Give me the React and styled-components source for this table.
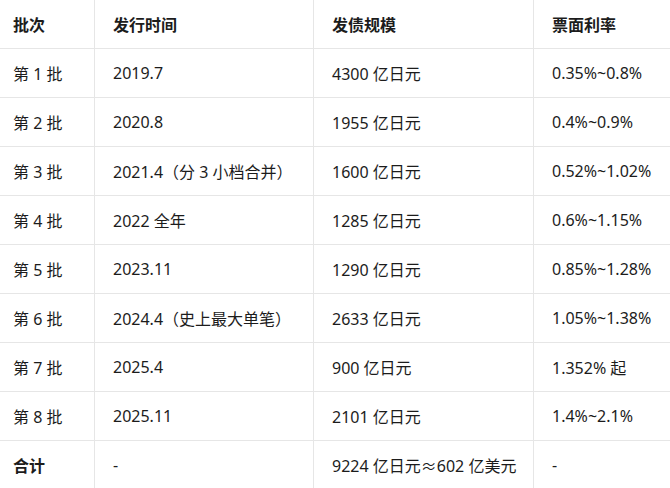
import React from 'react';
import styled, { createGlobalStyle } from 'styled-components';

const GlobalStyle = createGlobalStyle`
  html, body {
    margin: 0;
    padding: 0;
    background: #ffffff;
  }
  body {
    font-family: 'Noto Sans', 'Noto Sans CJK SC', sans-serif;
    color: #1c1c1c;
  }
`;

const Table = styled.div`
  display: grid;
  grid-template-columns: 95px 219px 220px 136px;
  width: 670px;
`;

const Cell = styled.div`
  box-sizing: border-box;
  height: 49px;
  display: flex;
  align-items: center;
  padding-left: ${(p) => (p.first ? '13px' : '18px')};
  font-size: 16px;
  font-weight: ${(p) => (p.bold ? 700 : 400)};
  border-bottom: 1px solid #e6e6e6;
  border-right: ${(p) => (p.last ? 'none' : '1px solid #e6e6e6')};
  white-space: nowrap;
`;

const header = ['批次', '发行时间', '发债规模', '票面利率'];

const rows = [
  ['第 1 批', '2019.7', '4300 亿日元', '0.35%~0.8%'],
  ['第 2 批', '2020.8', '1955 亿日元', '0.4%~0.9%'],
  ['第 3 批', '2021.4（分 3 小档合并）', '1600 亿日元', '0.52%~1.02%'],
  ['第 4 批', '2022 全年', '1285 亿日元', '0.6%~1.15%'],
  ['第 5 批', '2023.11', '1290 亿日元', '0.85%~1.28%'],
  ['第 6 批', '2024.4（史上最大单笔）', '2633 亿日元', '1.05%~1.38%'],
  ['第 7 批', '2025.4', '900 亿日元', '1.352% 起'],
  ['第 8 批', '2025.11', '2101 亿日元', '1.4%~2.1%'],
];

const total = ['合计', '-', '9224 亿日元≈602 亿美元', '-'];

const Row = ({ cells, bold, firstBold }) =>
  cells.map((text, i) => (
    <Cell
      key={i}
      first={i === 0}
      last={i === cells.length - 1}
      bold={bold || (firstBold && i === 0)}
    >
      {text}
    </Cell>
  ));

const App = () => (
  <>
    <GlobalStyle />
    <Table>
      <Row cells={header} bold />
      {rows.map((r, i) => (
        <Row key={i} cells={r} />
      ))}
      <Row cells={total} firstBold />
    </Table>
  </>
);

export default App;
